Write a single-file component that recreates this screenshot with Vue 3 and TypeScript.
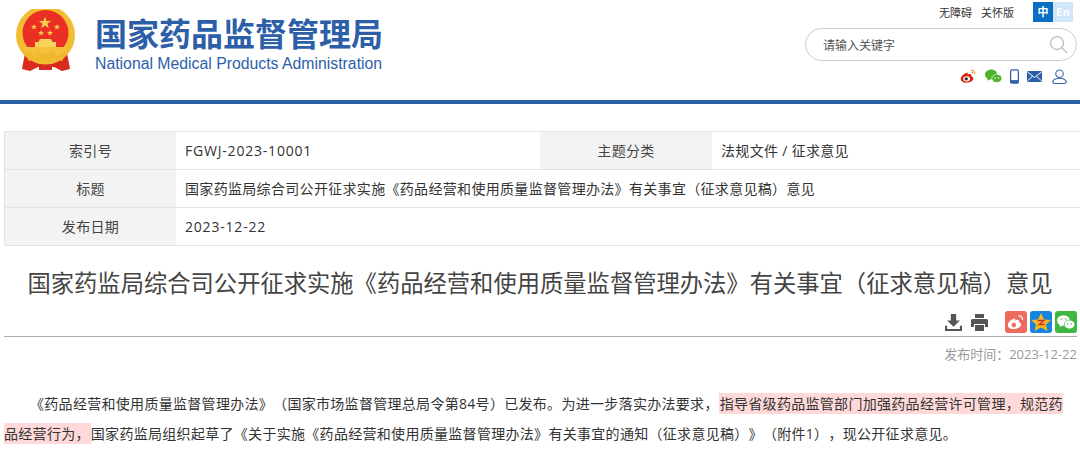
<template>
  <div class="page">
    <header class="header">
      <div class="brand">
        <svg class="emblem" viewBox="0 0 60 64" width="60" height="64">
          <path d="M9 44 L6 60 L14 62 L22 58 L38 58 L46 62 L54 60 L51 44 Z" fill="#d92b20" />
          <circle cx="29.5" cy="26" r="29.5" fill="#f2bd33" />
          <circle cx="29.5" cy="24" r="23" fill="#ea2f24" />
          <polygon v-for="s in stars" :key="s.cx" :points="starPoints(s.cx, s.cy, s.r)" fill="#f6cf4c" />
          <path d="M24 30 H35 L36.5 33 H40 V38 H19 V33 H22.5 Z" fill="#f8d35a" />
          <path d="M8 38 H51 L48 46 H11 Z" fill="#f3c23a" />
          <path d="M8 44 Q14 42 18 47 L22 42 L29.5 46 L37 42 L41 47 Q45 42 51 44 L46 52 L38 50 L37 55 L29.5 52 L22 55 L21 50 L13 52 Z" fill="#efb82e" />
          <path d="M23 56 H36 V61 H23 Z" fill="#d92b20" />
        </svg>
        <div class="brand-text">
          <div class="brand-cn">国家药品监督管理局</div>
          <div class="brand-en">National Medical Products Administration</div>
        </div>
      </div>
      <div class="tools">
        <div class="tool-links">
          <span class="tool-link">无障碍</span>
          <span class="tool-link">关怀版</span>
          <div class="lang">
            <span class="lang-cn">中</span>
            <span class="lang-en">En</span>
          </div>
        </div>
        <div class="search">
          <span class="placeholder">请输入关键字</span>
          <svg viewBox="0 0 20 20" width="19" height="19" fill="none" stroke="#bdbdbd" stroke-width="1.4">
            <circle cx="8.5" cy="8.5" r="6.8" />
            <path d="M13.5 13.5 L19 19" />
          </svg>
        </div>
        <div class="social">
          <svg viewBox="0 0 18 16" width="17" height="16">
            <path d="M7.5 4.5 C3.5 5.5 .5 9 .8 11.5 C1.2 14.5 5 15.5 8 15 C11.5 14.5 14.5 12.5 14 10 C13.8 8.8 12.5 8.4 11.8 8.2 C12.5 6.5 11.5 5.6 10 5.8 L8 6.5 C8.5 4.8 8.5 4.4 7.5 4.5 Z" fill="#d81e06" />
            <ellipse cx="7" cy="11" rx="3.6" ry="2.8" fill="#fff" />
            <circle cx="6.6" cy="11" r="1.8" fill="#333" />
            <path d="M11.5 2 C14 1.5 16 3.5 15.5 6 M12 4 C13 3.8 13.8 4.6 13.6 5.6" fill="none" stroke="#f0a020" stroke-width="1.2" />
          </svg>
          <svg viewBox="0 0 18 15" width="17" height="15">
            <ellipse cx="6.5" cy="5.5" rx="6.5" ry="5.3" fill="#4fb22c" />
            <path d="M3 9 L2.5 12 L6 10 Z" fill="#4fb22c" />
            <ellipse cx="12.5" cy="9.5" rx="5.3" ry="4.4" fill="#4fb22c" stroke="#fff" stroke-width=".7" />
            <circle cx="10.7" cy="9" r=".8" fill="#fff" />
            <circle cx="14.3" cy="9" r=".8" fill="#fff" />
          </svg>
          <svg viewBox="0 0 10 16" width="9" height="15">
            <rect x=".7" y=".7" width="8.6" height="14.6" rx="1.5" fill="none" stroke="#2d5fa8" stroke-width="1.4" />
            <rect x=".7" y="12" width="8.6" height="3.3" fill="#2d5fa8" />
          </svg>
          <svg viewBox="0 0 15 11" width="15" height="11">
            <rect width="15" height="11" rx="1" fill="#2d5fa8" />
            <path d="M.5 1 L7.5 6.5 L14.5 1 M.5 10 L5.5 5.2 M14.5 10 L9.5 5.2" fill="none" stroke="#fff" />
          </svg>
          <svg class="user" viewBox="0 0 16 16" width="15" height="15" fill="none" stroke="#3f66b2" stroke-width="1.2">
            <circle cx="8" cy="5" r="4" />
            <path d="M3 15.4 H13 C15 15.4 15.5 14 15 13 C14 11 11.5 9.8 8 9.8 C4.5 9.8 2 11 1 13 C.5 14 1 15.4 3 15.4 Z" />
          </svg>
        </div>
      </div>
    </header>

    <div class="meta">
      <div class="meta-label">索引号</div>
      <div class="meta-value latin">FGWJ-2023-10001</div>
      <div class="meta-label">主题分类</div>
      <div class="meta-value">法规文件 / 征求意见</div>
      <div class="meta-label">标题</div>
      <div class="meta-value wide">国家药监局综合司公开征求实施《药品经营和使用质量监督管理办法》有关事宜（征求意见稿）意见</div>
      <div class="meta-label">发布日期</div>
      <div class="meta-value wide latin">2023-12-22</div>
    </div>

    <h1 class="title">国家药监局综合司公开征求实施《药品经营和使用质量监督管理办法》有关事宜（征求意见稿）意见</h1>

    <div class="share">
      <svg viewBox="0 0 16 16" width="17" height="17" fill="#555">
        <path d="M5.5 0 H10.5 V6 H14 L8 12 L2 6 H5.5 Z" />
        <path d="M0 11 H2 V14 H14 V11 H16 V16 H0 Z" />
      </svg>
      <svg class="print" viewBox="0 0 17 17" width="17" height="17" fill="#555">
        <path d="M4 0 H13 V4 H4 Z" />
        <path d="M1.5 5 H15.5 Q17 5 17 6.5 V13 H14 V10 H3 V13 H0 V6.5 Q0 5 1.5 5 Z" />
        <path d="M4 11 H13 V17 H4 Z" />
      </svg>
      <span class="share-box weibo">
        <svg viewBox="0 0 18 16" width="18" height="16">
          <path d="M7.5 4.5 C3.5 5.5 .5 9 .8 11.5 C1.2 14.5 5 15.5 8 15 C11.5 14.5 14.5 12.5 14 10 C13.8 8.8 12.5 8.4 11.8 8.2 C12.5 6.5 11.5 5.6 10 5.8 L8 6.5 C8.5 4.8 8.5 4.4 7.5 4.5 Z" fill="#fff" />
          <circle cx="6.8" cy="11" r="2.2" fill="#ee6a5e" />
          <path d="M11.5 2 C14 1.5 16 3.5 15.5 6" fill="none" stroke="#fff" stroke-width="1.3" />
        </svg>
      </span>
      <span class="share-box qzone">
        <svg viewBox="0 0 20 20" width="20" height="20">
          <polygon points="10,1 13,7.5 20,8 15,12.5 16.5,19 10,15.5 3.5,19 5,12.5 0,8 7,7.5" fill="#f7b71d" />
          <path d="M6.5 8.5 H13 L8 12.5 H13.5" fill="none" stroke="#c9302c" stroke-width="1.3" />
        </svg>
      </span>
      <span class="share-box wechat">
        <svg viewBox="0 0 18 15" width="18" height="15">
          <ellipse cx="6.5" cy="5.5" rx="6.5" ry="5.3" fill="#fff" />
          <path d="M3 9 L2.5 12 L6 10 Z" fill="#fff" />
          <ellipse cx="12.5" cy="9.5" rx="5.3" ry="4.4" fill="#fff" stroke="#3fb63f" stroke-width=".7" />
          <circle cx="4.5" cy="4" r=".8" fill="#3fb63f" />
          <circle cx="8.5" cy="4" r=".8" fill="#3fb63f" />
          <circle cx="10.7" cy="9" r=".7" fill="#3fb63f" />
          <circle cx="14.3" cy="9" r=".7" fill="#3fb63f" />
        </svg>
      </span>
    </div>
    <div class="publish">发布时间：2023-12-22</div>

    <p class="body">《药品经营和使用质量监督管理办法》（国家市场监督管理总局令第84号）已发布。为进一步落实办法要求，<mark>指导省级药品监管部门加强药品经营许可管理，规范药品经营行为，</mark>国家药监局组织起草了《关于实施《药品经营和使用质量监督管理办法》有关事宜的通知（征求意见稿）》（附件1），现公开征求意见。</p>
  </div>
</template>

<script setup lang="ts">
const stars = [
  { cx: 29, cy: 14, r: 6.5 },
  { cx: 18, cy: 18, r: 3.2 },
  { cx: 41, cy: 18, r: 3.2 },
  { cx: 25, cy: 24, r: 3.2 },
  { cx: 34, cy: 24, r: 3.2 },
]

// five-pointed star, tip up
const starPoints = (cx: number, cy: number, r: number) => {
  const pts: string[] = []
  for (let i = 0; i < 10; i++) {
    const rad = i % 2 === 0 ? r : r * 0.4
    const a = (Math.PI / 5) * i - Math.PI / 2
    pts.push(`${(cx + rad * Math.cos(a)).toFixed(2)},${(cy + rad * Math.sin(a)).toFixed(2)}`)
  }
  return pts.join(' ')
}
</script>

<style>
html,
body {
  margin: 0;
  background: #fff;
  overflow: hidden;
}
</style>

<style scoped>
.page {
  width: 1080px;
  height: 449px;
  overflow: hidden;
  font-family: "Open Sans", "Noto Sans CJK SC", sans-serif;
  color: #333;
  text-spacing-trim: space-all;
}

.header {
  height: 100px;
  border-bottom: 4px solid #2d5fa8;
  display: flex;
  justify-content: space-between;
}

.brand {
  display: flex;
  padding: 9px 0 0 16px;
}

.emblem {
  display: block;
}

.brand-text {
  margin-left: 19px;
  padding-top: 7px;
}

.brand-cn {
  font-size: 32px;
  line-height: 36px;
  font-weight: 700;
  color: #2d5fa8;
}

.brand-en {
  font-family: "Liberation Sans", Arial, sans-serif;
  font-size: 15.8px;
  line-height: 20px;
  color: #2d5fa8;
  margin-top: 2px;
  white-space: nowrap;
}

.tools {
  width: 276px;
  padding-top: 2px;
  display: flex;
  flex-direction: column;
  align-items: flex-end;
}

.tool-links {
  display: flex;
  align-items: center;
  height: 20px;
  font-size: 11px;
  color: #333;
  padding-right: 7px;
}

.tool-link {
  margin-right: 9px;
}

.lang {
  display: flex;
  margin-left: 10px;
  font-size: 11px;
  line-height: 20px;
  font-weight: 700;
  text-align: center;
}

.lang-cn {
  width: 20px;
  background: #0a6fc2;
  color: #fff;
}

.lang-en {
  width: 20px;
  background: #cfe6fb;
  color: #fff;
}

.search {
  box-sizing: border-box;
  width: 272px;
  height: 33px;
  margin: 6px 3px 0 0;
  padding: 0 8px 0 17px;
  border: 1px solid #ccc;
  border-radius: 17px;
  display: flex;
  align-items: center;
  justify-content: space-between;
  font-size: 12px;
  color: #555;
}

.social {
  display: flex;
  align-items: center;
  gap: 8px;
  height: 18px;
  margin: 6px 13px 0 0;
}

.user {
  margin-left: 2px;
}

.meta {
  margin: 27px 0 0 4px;
  display: grid;
  grid-template-columns: 171px 364px 172px 1fr;
  grid-auto-rows: 37px;
  gap: 1px 0;
  width: 1076px;
  background: #e3e3e3;
  border: solid #e3e3e3;
  border-width: 1px 0 1px 1px;
  box-sizing: border-box;
  font-size: 14px;
  letter-spacing: 0.32px;
}

.meta-label {
  background: #f3f3f3;
  text-align: center;
  line-height: 37px;
  color: #444;
}

.meta-value {
  background: #fff;
  line-height: 37px;
  padding-left: 9px;
  white-space: nowrap;
}

.latin {
  letter-spacing: 0.8px;
}

.wide {
  grid-column: 2 / 5;
}

.title {
  margin: 20px 0 0;
  font-size: 23.3px;
  line-height: 34px;
  font-weight: 400;
  text-align: center;
  color: #444;
  white-space: nowrap;
}

.share {
  display: flex;
  justify-content: flex-end;
  align-items: center;
  margin: 10px 0 0 4px;
  padding-bottom: 2px;
  border-bottom: 1px solid #aaa;
  height: 24px;
  width: 1073px;
}

.print {
  margin-left: 9px;
}

.share-box {
  width: 22px;
  height: 22px;
  border-radius: 3px;
  display: flex;
  align-items: center;
  justify-content: center;
  margin-left: 3px;
}

.weibo {
  background: #ee6a5e;
  margin-left: 17px;
}

.qzone {
  background: #1585e0;
}

.wechat {
  background: #3fb63f;
}

.publish {
  text-align: right;
  padding: 7px 3px 0 0;
  font-size: 13px;
  line-height: 20px;
  color: #999;
}

.body {
  margin: 25px 6px 0 4px;
  font-size: 14px;
  line-height: 30px;
  text-indent: 26px;
  letter-spacing: 0.3px;
  color: #333;
}

mark {
  background: #ffd9d9;
  color: #333;
  padding: 1px;
}
</style>
